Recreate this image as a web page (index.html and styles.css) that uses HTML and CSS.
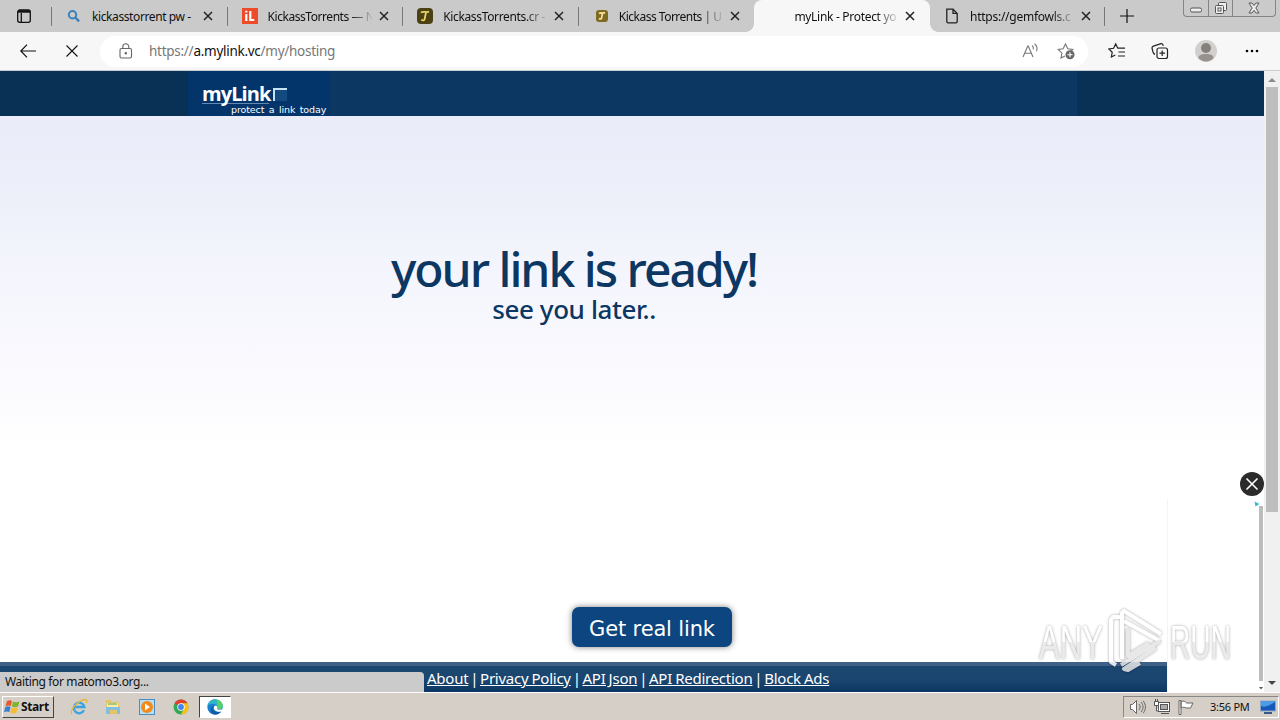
FILE: index.html
```html
<!DOCTYPE html>
<html lang="en">
<head>
  <meta charset="UTF-8" />
  <title>myLink - Protect your links</title>
  <link rel="stylesheet" href="styles.css">
</head>
<body>
  <div class="tabs">
    <div class="tab-actions">
      <svg width="16" height="16" viewBox="0 0 16 16" fill="none" stroke="#111" stroke-width="1.3"><rect x="1.7" y="2" width="12.6" height="12.3" rx="2"/><path d="M2 3.5h12" stroke-width="2.4"/><path d="M5.3 5v9"/></svg>
    </div>
    <div class="tab">
      <svg class="favicon" viewBox="0 0 16 16" fill="none" stroke="#3b82bd"><circle cx="6.5" cy="6.7" r="3.7" stroke-width="2"/><path d="M9.3 9.5l3.8 3.8" stroke-width="2.4"/></svg>
      <span class="title t1">kickasstorrent pw -</span>
      <svg class="close" viewBox="0 0 10 10"><path d="M1 1l8 8M9 1l-8 8"/></svg>
    </div>
    <div class="tab">
      <svg class="favicon" viewBox="0 0 16 16"><rect width="16" height="16" fill="#ee4b2b"/><path d="M4.3 6v7M4.3 2.8v1.8M8.3 3v9h4" stroke="#fff" stroke-width="2.2" fill="none"/></svg>
      <span class="title t2 fade">KickassTorrents — N</span>
      <svg class="close" viewBox="0 0 10 10"><path d="M1 1l8 8M9 1l-8 8"/></svg>
    </div>
    <div class="tab">
      <svg class="favicon" viewBox="0 0 16 16"><rect width="16" height="16" rx="4" fill="#4c4113"/><path d="M4 4.700c2-2 5 .3 8-1M9 4.500L7.500 11.500c-.3 1-2 1-3.200.2" stroke="#e9d46c" stroke-width="1.800" fill="none"/></svg>
      <span class="title t3 fade">KickassTorrents.cr -</span>
      <svg class="close" viewBox="0 0 10 10"><path d="M1 1l8 8M9 1l-8 8"/></svg>
    </div>
    <div class="tab">
      <svg class="favicon" viewBox="0 0 16 16"><rect x="3" y="2" width="12" height="12" rx="3" fill="#806923"/><path d="M6 5.500c2-1.500 4 .3 6-1M9.600 5L8.500 10.300c-.3 1-1.500.8-2.500.2" stroke="#fae99b" stroke-width="1.600" fill="none"/></svg>
      <span class="title t4 fade">Kickass Torrents | U</span>
      <svg class="close" viewBox="0 0 10 10"><path d="M1 1l8 8M9 1l-8 8"/></svg>
    </div>
    <div class="tab active">
      <span class="favicon"></span>
      <span class="title t5 fade">myLink - Protect yo</span>
      <svg class="close" viewBox="0 0 10 10"><path d="M1 1l8 8M9 1l-8 8"/></svg>
    </div>
    <div class="tab last">
      <svg class="favicon" viewBox="0 0 16 16" fill="none" stroke="#222" stroke-width="1.3"><path d="M3 1.2h6l4.2 4.2v8.2a1.3 1.3 0 0 1-1.3 1.3H4.1a1.3 1.3 0 0 1-1.3-1.3V1.2zM9 1.2v4.2h4.2"/></svg>
      <span class="title t6 fade">https://gemfowls.c</span>
      <svg class="close" viewBox="0 0 10 10"><path d="M1 1l8 8M9 1l-8 8"/></svg>
    </div>
    <svg class="new-tab" width="14" height="14" viewBox="0 0 14 14" stroke="#111" stroke-width="1.2"><path d="M7 0v14M0 7h14"/></svg>
    <div class="window-buttons">
      <span><svg width="14" height="14" viewBox="0 0 14 14"><rect x="1.5" y="7" width="11" height="4" rx="1.5"/></svg></span>
      <span><svg width="14" height="14" viewBox="0 0 14 14"><rect x="4.5" y="1.5" width="8" height="8" rx="1"/><rect x="1.5" y="4.5" width="8" height="8" rx="1"/><rect x="4" y="7" width="3" height="3"/></svg></span>
      <span class="wide"><svg width="14" height="14" viewBox="0 0 14 14"><path d="M2 2h3l2 2.6L9 2h3L8.800 7l3.200 5H9L7 9.300 5 12H2l3.200-5z"/></svg></span>
    </div>
  </div>

  <div class="toolbar">
    <svg class="back" width="16" height="14" viewBox="0 0 16 14"><path d="M16 7H.8M7 .6L.8 7 7 13.4"/></svg>
    <svg class="stop" width="12" height="12" viewBox="0 0 12 12"><path d="M.5 .5l11 11M11.5 .5l-11 11"/></svg>
    <div class="address">
      <svg width="14" height="16" viewBox="0 0 14 16" fill="none" stroke="#666" stroke-width="1.1"><rect x="1" y="5.5" width="11.5" height="9.5" rx="1.5"/><path d="M3.8 5.5V3.7a3 3 0 0 1 6 0v1.8"/><circle cx="6.8" cy="10.2" r=".7" fill="#666"/></svg>
      <span class="url">https://<b>a.mylink.vc</b>/my/hosting</span>
      <svg class="read" width="17" height="16" viewBox="0 0 17 16" fill="none" stroke="#777" stroke-width="1.1"><path d="M1 14L5.800 3h.5L11 14M2.700 10.300h6.600M10 2.500c1.400 1 1.700 2.500 1.300 4M12.500 .8c2.500 2 3.100 4.700 2 7.500"/></svg>
      <svg width="18" height="18" viewBox="0 0 18 18" fill="none" stroke="#777" stroke-width="1.1"><path d="M8 14l-4 2.100.9-5L1.200 7.500l4.900-.7L8.500 2l2.300 4.800 5 .7-1.600 1.700"/><circle cx="13" cy="12.800" r="4.500" fill="#666" stroke="none"/><path d="M13 10.300v5M10.500 12.800h5" stroke="#fff"/></svg>
    </div>
    <svg class="favs" width="18" height="18" viewBox="0 0 18 18" fill="none" stroke="#222" stroke-width="1.2"><path d="M7.300 13l-3.900 2 .8-4.700L.9 7l4.700-.7 2.100-4.400 2.100 4.300H17M10.500 10H17M10 14h7"/></svg>
    <svg class="collections" width="18" height="18" viewBox="0 0 18 18" fill="none" stroke="#222" stroke-width="1.2"><rect x="6" y="6" width="10.500" height="10.500" rx="2"/><path d="M11.200 8.500v5.500M8.500 11.200H14M4 12.500c-1.200-.7-1.700-1.500-2-2.500L1.100 6.500c-.3-1.200.2-2 1.300-2.400L10 1.700c1-.2 1.700.3 2 1.200l.2.900"/></svg>
    <svg class="avatar" width="22" height="22" viewBox="0 0 22 22"><circle cx="11" cy="11" r="11" fill="#d2d0ce"/><circle cx="11" cy="8" r="5" fill="#85807c"/><path d="M3.500 18c0-3 3-4 7.500-4s7.500 1 7.500 4c-4 4.500-11 4.500-15 0z" fill="#96918d"/></svg>
    <svg class="more" width="14" height="4" viewBox="0 0 14 4"><circle cx="2" cy="2" r="1.3"/><circle cx="7" cy="2" r="1.3"/><circle cx="12" cy="2" r="1.3"/></svg>
  </div>

  <div class="viewport">
    <div class="page">
      <header class="site-header">
        <div class="header-inner">
          <div class="logo">
            <div class="logo-name"><span>myLink</span><i></i></div>
            <div class="logo-tag">protect a link today</div>
          </div>
        </div>
      </header>
      <main>
        <div class="message">
          <h1>your link is ready!</h1>
          <h2>see you later..</h2>
        </div>
        <button class="get-link">Get real link</button>
      </main>
      <footer>
        <a href="#">About</a> | <a href="#">Privacy Policy</a> | <a href="#">API Json</a> | <a href="#">API Redirection</a> | <a href="#">Block Ads</a>
      </footer>
      <div class="ad">
        <svg class="ad-mark" width="6" height="6" viewBox="0 0 6 6"><path d="M.5 .5L5.500 3 1.500 5.500z" fill="#35b8d8"/></svg>
        <div class="ad-scroll"></div>
        <svg class="ad-down" width="4" height="4" viewBox="0 0 4 4"><path d="M0 1h4L2 3.500z" fill="#555"/></svg>
      </div>
      <svg class="ad-close" width="24" height="24" viewBox="0 0 24 24"><circle cx="12" cy="12" r="12" fill="#2b2b2b"/><path d="M6.500 6.500l11 11M17.500 6.500l-11 11" stroke="#fff" stroke-width="1.600"/></svg>
      <div class="status">Waiting for matomo3.org...</div>
    </div>
    <div class="scrollbar">
      <svg width="16" height="16" viewBox="0 0 16 16"><path d="M4 11l4-4 4 4z" fill="#8b8b8b"/></svg>
      <div class="thumb"></div>
      <svg class="down" width="16" height="16" viewBox="0 0 16 16"><path d="M4 5h8l-4 4z" fill="#444"/></svg>
    </div>
  </div>

  <div class="taskbar">
    <div class="start">
      <svg width="17" height="16" viewBox="0 0 17 16"><path d="M3 2c2-1 3.500-.8 5 0L6.800 7C5 6.200 3.500 6.200 1.500 7z" fill="#e9582b"/><path d="M9 2.500c2 1 4 1 6.500 0L14 7.600c-2 .9-4 .9-6.200-.1z" fill="#7eb52f"/><path d="M1.300 8c2-.9 3.500-.8 5.200 0L5.300 13C3.500 12.200 2 12.200 0 13z" fill="#3b7fd0"/><path d="M7.500 8.500c2 1 4 1 6.200.1L12.300 14c-2 .8-4 .6-6-.4z" fill="#f7bd2b"/></svg>
      <span>Start</span>
    </div>
    <div class="launch">
      <svg width="18" height="18" viewBox="0 0 18 18" fill="none"><path d="M14 12.200a5.300 5.300 0 1 1 .4-3.200H5" stroke="#39a4df" stroke-width="2.300"/><path d="M2 16C-1 13 8 2 15.500 1.500c2 0 1.500 2 .7 3.500" stroke="#e9b43a" stroke-width="1.300"/></svg>
      <svg width="18" height="18" viewBox="0 0 18 18"><path d="M2 2h5l1 2h7v12H2z" fill="#e5c465"/><path d="M3 5h11v5H3z" fill="#f9edab"/><path d="M2 9h14v7h-3v-4H6v4H2z" fill="#83bedc"/><path d="M4 6h9" stroke="#57a64a"/></svg>
      <svg width="18" height="18" viewBox="0 0 18 18"><rect x="1.500" y="1.500" width="15" height="15" fill="#b9ddf2" stroke="#4a8ec1"/><circle cx="9" cy="9" r="6" fill="#f28a1b"/><path d="M7 5.500l5 3.500-5 3.500z" fill="#fff"/></svg>
      <svg width="18" height="18" viewBox="0 0 18 18"><circle cx="9" cy="9" r="7.500" fill="#35a853"/><path d="M9 9L2.500 5.200A7.500 7.500 0 0 1 15.500 5.200H9z" fill="#e43e2f"/><path d="M9 5.200h6.500A7.500 7.500 0 0 1 9 16.500l3-6z" fill="#fbc116"/><circle cx="9" cy="9" r="3.700" fill="#fff"/><circle cx="9" cy="9" r="2.900" fill="#4285f4"/></svg>
    </div>
    <div class="running">
      <svg width="18" height="18" viewBox="0 0 18 18"><circle cx="9" cy="9" r="7.700" fill="#1b7fd0"/><path d="M1.500 8C2.500-1 16-.5 16.700 7.500c.2 3-3 4.500-6 3.300 1-3-.5-5-3.700-5C4 5.800 2.200 7 1.500 8z" fill="#2fb5c9"/><path d="M10 1.400c4 .3 6.700 3 6.700 6.600 0 2.700-3 4-6 2.800 1.300-3 1.500-6-.7-9.400z" fill="#58cf68"/><path d="M7.500 8c-3 4 2 7.500 7.800 5-2 3.500-6 4.500-8.800 2.500C3.500 13 4.500 9 7.500 8z" fill="#1259a6"/><path d="M8 9c.3-2 3.300-1.500 3.300.3 0 .8-.7 1-.3 1.700 1 1 3.500 1 6 0l-1 2.300C12 15 7 12.500 8 9z" fill="#fff"/></svg>
    </div>
    <div class="tray">
      <svg width="18" height="16" viewBox="0 0 18 16" fill="#fff" stroke="#666"><path d="M1.500 5.500h2l4-4v13l-4-4h-2z"/><path d="M10 5c1.500 2 1.500 4 0 6M12 3c2.700 3 2.700 7 0 10M14.200 1.800c3 4 3 8.500 0 12.400" fill="none"/></svg>
      <svg width="18" height="16" viewBox="0 0 18 16" fill="#fff" stroke="#555"><rect x="5.500" y="3.500" width="11" height="9"/><rect x="7.500" y="5.500" width="7" height="5" fill="#aaa"/><path d="M8 14.500h8M1.500 2.500h4v4h-4zM2.500 0v2M4.500 0v2M3.500 7v5h2"/></svg>
      <svg width="18" height="16" viewBox="0 0 18 16" fill="#fff" stroke="#666"><path d="M2 1.500h2v14H2zM4 2.500c3-1 4 0 5.500 1.500H16l-2.500 5H9C7.500 8 6 8 4 9z"/></svg>
      <span class="clock">3:56 PM</span>
      <svg width="16" height="14" viewBox="0 0 16 14"><rect x=".5" y="1" width="15" height="10" fill="#1658b8" stroke="#8fa7c7"/><path d="M1 6c5 2 9-1 14-4v-1H1z" fill="#4d9be5"/><path d="M4 13h8" stroke="#375a8a" stroke-width="2"/></svg>
    </div>
  </div>

  <svg class="watermark" width="204" height="68" viewBox="0 0 204 68">
    <defs>
      <linearGradient id="wm" x1="0" y1="0" x2="0" y2="1"><stop offset=".5" stop-color="#fff"/><stop offset=".5" stop-color="#e8e8e8"/></linearGradient>
    </defs>
    <g fill="url(#wm)">
      <text x="5" y="52" textLength="64" lengthAdjust="spacingAndGlyphs">ANY</text>
      <text x="136" y="52" textLength="61" lengthAdjust="spacingAndGlyphs">RUN</text>
    </g>
    <g class="play">
      <path d="M86 10h-7l-2 3v42l5 3M88 52V6l2-2 37 23M90 14l36 20"/>
      <path class="low" d="M94 22v27l21-13M126 34L87 58M122 41L90 62l4 1 12-7"/>
    </g>
  </svg>
</body>
</html>
```
FILE: styles.css
```css
* {
  box-sizing: border-box;
}
body {
  margin: 0;
  width: 1280px;
  height: 720px;
  overflow: hidden;
  display: flex;
  flex-direction: column;
  font-family: "Noto Sans", sans-serif;
  font-size: 12px;
  color: #111;
  background: #fff;
}
svg {
  display: block;
  flex-shrink: 0;
}

/* tab strip */
.tabs {
  display: flex;
  height: 32px;
  background: #cacaca;
}
.tab-actions {
  width: 52px;
  padding: 8px 0 0 16px;
}
.tab {
  display: flex;
  align-items: center;
  width: 175.6px;
  padding-left: 14px;
  position: relative;
}
.tab::before {
  content: "";
  position: absolute;
  left: -1px;
  top: 7px;
  width: 1px;
  height: 19px;
  background: #777;
}
.tab.active {
  background: #f7f7f7;
  border-radius: 8px 8px 0 0;
}
.tab.active::before,
.tab.active::after {
  content: "";
  position: absolute;
  left: -8px;
  top: auto;
  bottom: 0;
  width: 8px;
  height: 8px;
  background: radial-gradient(circle at 0 0, transparent 7.5px, #f7f7f7 8px);
}
.tab.active::after {
  left: auto;
  right: -8px;
  background: radial-gradient(circle at 100% 0, transparent 7.5px, #f7f7f7 8px);
}
.tab.active + .tab::before {
  display: none;
}
.tab.last {
  width: 175px;
}
.tab.last::after {
  content: "";
  position: absolute;
  right: 0;
  top: 7px;
  width: 1px;
  height: 19px;
  background: #777;
}
.favicon {
  width: 16px;
  height: 16px;
  flex-shrink: 0;
}
.title {
  width: 104px;
  margin-left: 10px;
  white-space: nowrap;
}
.t1 { letter-spacing: -0.4px; }
.t2 { letter-spacing: -0.45px; }
.t3 { letter-spacing: -0.35px; }
.t4 { letter-spacing: -0.5px; }
.t5 { letter-spacing: -0.3px; }
.t6 { letter-spacing: -0.25px; }
.fade {
  mask-image: linear-gradient(to right, #000 82px, transparent 106px);
}
.close {
  width: 10px;
  height: 10px;
  margin-left: 7px;
  stroke: #222;
  stroke-width: 1.5;
}
.new-tab {
  margin: 9px 0 0 15px;
}
.window-buttons {
  display: flex;
  width: 93px;
  height: 17px;
  margin-left: auto;
  margin-right: 4px;
  border: 1px solid #858585;
  border-top: none;
  border-radius: 0 0 4px 4px;
}
.window-buttons span {
  width: 25px;
  display: flex;
  align-items: center;
  justify-content: center;
  border-right: 1px solid #858585;
}
.window-buttons .wide {
  width: 42px;
  border: none;
}
.window-buttons svg {
  fill: #eee;
  stroke: #555;
}

/* toolbar */
.toolbar {
  display: flex;
  align-items: center;
  height: 39px;
  background: #f7f7f7;
  border-bottom: 1px solid #c8cdd2;
}
.back {
  margin-left: 20px;
  fill: none;
  stroke: #111;
  stroke-width: 1.2;
}
.stop {
  margin-left: 30px;
  stroke: #111;
  stroke-width: 1.1;
}
.address {
  display: flex;
  align-items: center;
  width: 988px;
  height: 31px;
  margin-left: 22px;
  padding: 0 13px 0 19px;
  background: #fff;
  border-radius: 16px;
}
.url {
  margin-left: 16px;
  font-size: 13.5px;
  letter-spacing: -0.27px;
  color: #777;
}
.url b {
  font-weight: normal;
  color: #111;
}
.read {
  margin-left: auto;
  margin-right: 18px;
}
.favs {
  margin-left: 20px;
}
.collections {
  margin-left: 25px;
}
.avatar {
  margin-left: 26px;
}
.more {
  margin-left: 28px;
}

/* page */
.viewport {
  display: flex;
  height: 621px;
}
.page {
  position: relative;
  display: flex;
  flex-direction: column;
  width: 1264px;
}
.site-header {
  height: 45px;
  background: #093156;
}
.header-inner {
  width: 889px;
  height: 45px;
  margin-left: 188px;
  background: #0c3763;
}
.logo {
  width: 142px;
  height: 45px;
  padding: 10px 0 0 14px;
  background: #03356a;
  color: #fff;
}
.logo-name {
  display: flex;
  height: 23px;
  font: bold 20px/25px "Open Sans", sans-serif;
  letter-spacing: -0.9px;
}
.logo-name span {
  width: 67px;
  border-bottom: 1px solid #5f8ab5;
  white-space: nowrap;
}
.logo-name i {
  width: 14px;
  height: 13px;
  margin: 7px 0 0 4px;
  border: solid #c6e2f5;
  border-width: 2px 0 0 2px;
  background: #134a80;
}
.logo-tag {
  margin-left: 29px;
  font: 9.5px/11px "DejaVu Sans", sans-serif;
  letter-spacing: -0.1px;
  word-spacing: 1.5px;
  white-space: nowrap;
}
main {
  display: flex;
  flex-direction: column;
  height: 546px;
  background: linear-gradient(#eaecfa, #edf0f9 25%, #f5f6fd 50%, #f9f9fe 75%, #fff) no-repeat 0 0 / 100% 330px;
}
.message {
  width: 1148px;
  padding-top: 121px;
  text-align: center;
  color: #0c3763;
}
h1 {
  margin: 0;
  font-size: 48px;
  line-height: 64px;
  font-weight: 500;
  letter-spacing: -2px;
}
h2 {
  margin: 0;
  font-size: 26px;
  line-height: 17px;
  font-weight: 500;
  letter-spacing: -0.4px;
}
.get-link {
  width: 160px;
  height: 40px;
  margin: auto 0 15px 572px;
  padding: 3px 0 0;
  border: none;
  border-radius: 7px;
  background: #0d4580;
  box-shadow: 0 0 6px rgba(0, 0, 0, 0.5);
  color: #fff;
  font: 21px "DejaVu Sans", sans-serif;
  letter-spacing: -0.15px;
  white-space: nowrap;
}
footer {
  height: 30px;
  padding-left: 427px;
  border-top: 4px solid #3f6187;
  background: linear-gradient(#1b4670, #1b4670 50%, #0c3763);
  color: #fff;
  font-size: 15px;
  line-height: 25px;
  letter-spacing: -0.38px;
  word-spacing: -1.6px;
  white-space: nowrap;
}
footer a {
  color: #fff;
  letter-spacing: -0.25px;
  word-spacing: -0.5px;
}
.ad {
  position: absolute;
  right: 0;
  bottom: 0;
  width: 97px;
  height: 193px;
  padding: 2px 0 0 86px;
  background: #fff;
  border-left: 1px solid #f4f4f4;
}
.ad-scroll {
  width: 4px;
  height: 175px;
  margin: -1px 0 0 5px;
  background: #bcbcbc;
}
.ad-down {
  margin: 5px 0 0 5px;
}
.ad-close {
  position: absolute;
  right: 0;
  top: 401px;
}
.status {
  position: absolute;
  left: 0;
  bottom: 0;
  width: 424px;
  height: 20px;
  padding-left: 5px;
  border-radius: 0 4px 0 0;
  background: #cbcbcb;
  line-height: 20px;
  letter-spacing: -0.35px;
}
.scrollbar {
  display: flex;
  flex-direction: column;
  width: 16px;
  background: #f0f0f0;
}
.thumb {
  width: 12px;
  height: 425px;
  margin-left: 2px;
  background: #bebebe;
}
.down {
  margin-top: auto;
}

/* taskbar */
.taskbar {
  display: flex;
  align-items: center;
  height: 28px;
  padding: 0 1px 0 2px;
  background: #d5cfc7;
  border-top: 1px solid #fff;
}
.start {
  display: flex;
  align-items: center;
  width: 52px;
  height: 22px;
  padding-left: 1px;
  border: 1px solid;
  border-color: #fff #444 #444 #fff;
  font: bold 12px "Open Sans", sans-serif;
  letter-spacing: -0.4px;
}
.launch {
  display: flex;
  gap: 16px;
  margin-left: 16px;
}
.running {
  width: 32px;
  height: 22px;
  margin-left: 9px;
  padding: 1px 0 0 6px;
  border: 1px solid;
  border-color: #444 #fff #fff #444;
  background: #fff;
}
.tray {
  display: flex;
  align-items: center;
  gap: 6px;
  width: 156px;
  height: 22px;
  margin-left: auto;
  padding-left: 5px;
  border: 1px solid;
  border-color: #888 #fff #fff #888;
}
.clock {
  width: 40px;
  margin: 0 4px 0 9px;
  font-size: 11px;
  letter-spacing: -0.25px;
  white-space: nowrap;
}

.watermark {
  position: absolute;
  left: 1034px;
  top: 607px;
  opacity: 0.85;
  filter: drop-shadow(0 0 1.5px rgba(0, 0, 0, 0.4));
}
.watermark text {
  font: 48px "Liberation Sans", sans-serif;
}
.play path {
  fill: none;
  stroke: #fff;
  stroke-width: 4;
  stroke-linejoin: round;
}
.play .low {
  stroke: #e4e4e4;
}
```
